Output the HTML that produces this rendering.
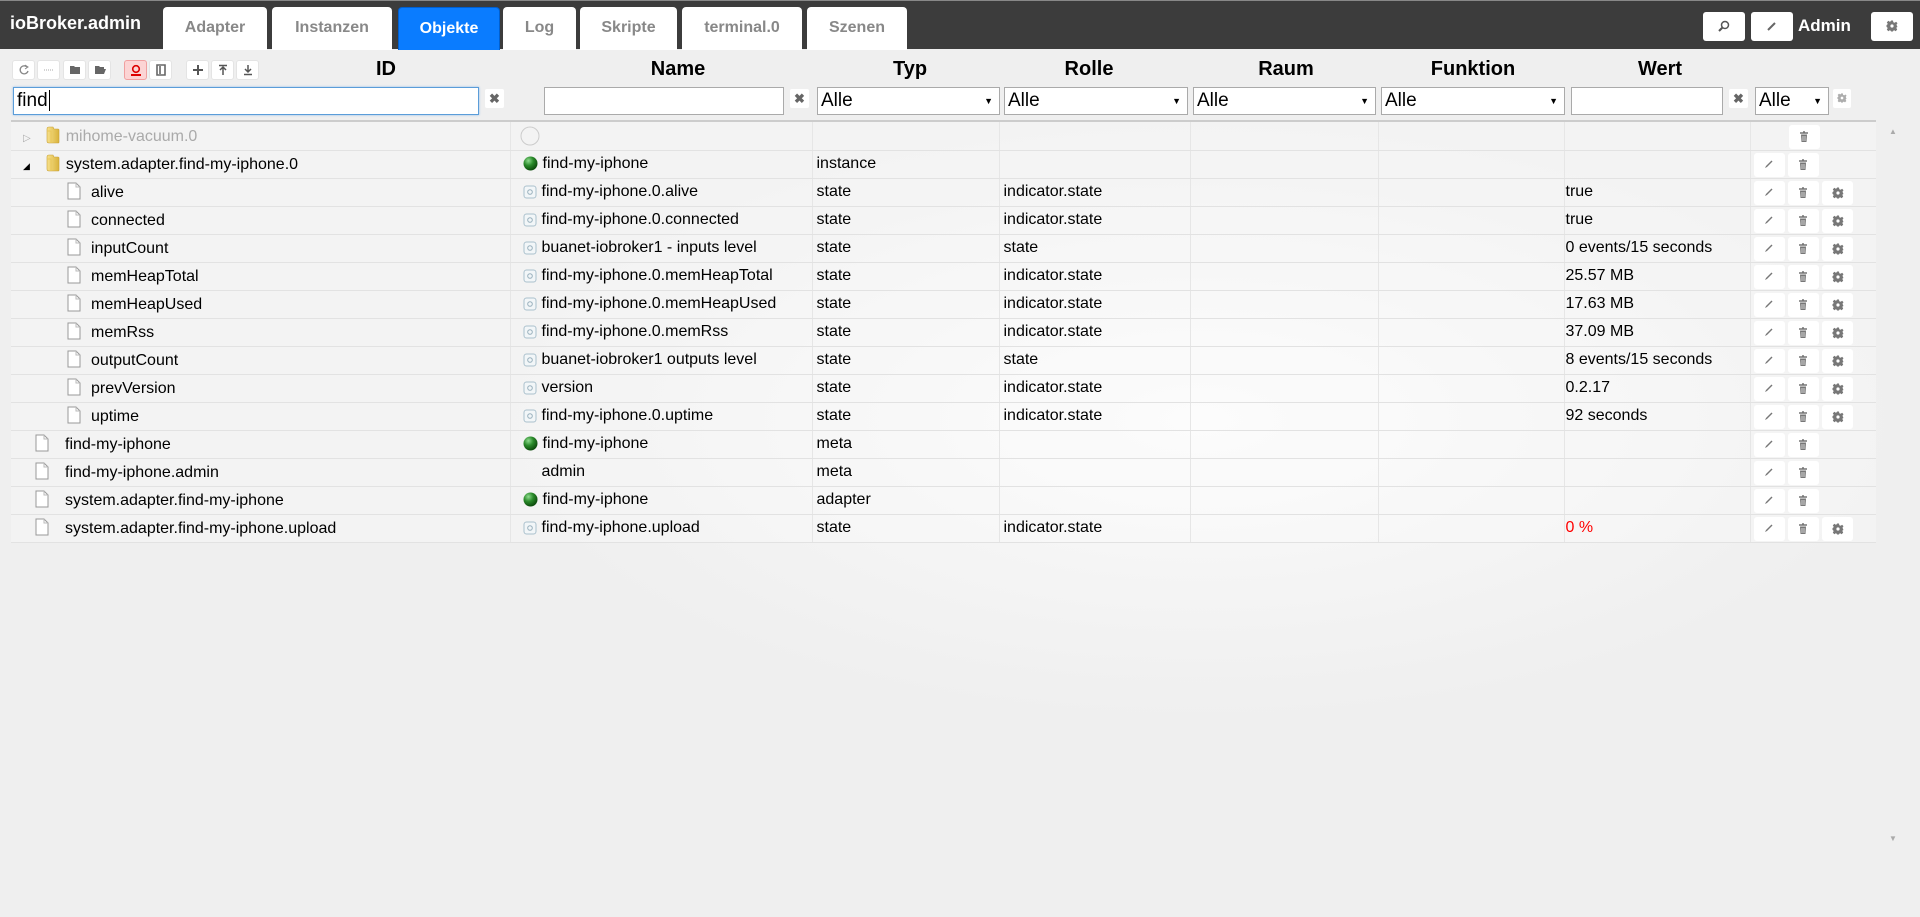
<!DOCTYPE html>
<html><head><meta charset="utf-8"><style>
*{box-sizing:border-box}
body{margin:0;width:1920px;height:917px;overflow:hidden;font-family:"Liberation Sans",Arial,sans-serif;background:radial-gradient(ellipse 700px 300px at 1200px 420px,#fbfbfb,#efefef 100%) #efefef;position:relative;color:#000}
.hdr{position:absolute;left:0;top:0;width:1920px;height:49px;background:#3c3c3c;border-top:1px solid #888}
.brand{position:absolute;left:10px;top:12px;color:#fff;font-weight:bold;font-size:18px}
.tab{position:absolute;top:6px;height:43px;background:#fff;border-radius:4px 4px 0 0;color:#888;font-weight:bold;font-size:16px;text-align:center;line-height:42px}
.tab.act{background:#0a7cff;color:#fff;border:1px solid #005fd0;border-bottom:none}
.hb{position:absolute;top:11px;width:42px;height:29px;background:#fff;border-radius:3px}
.hb svg{position:absolute;left:15px;top:8px}
.admin{position:absolute;left:1798px;top:15px;color:#fff;font-weight:bold;font-size:17px}
.tb{position:absolute;top:60px;width:23px;height:20px;background:#fff;border:1px solid #e4e4e4;border-radius:3px}
.tb svg{position:absolute;left:5px;top:3px}
.th{position:absolute;top:58px;font-weight:bold;font-size:20px;transform:translateX(-50%)}
.inp{position:absolute;top:87px;height:28px;background:#fff;border:1px solid #aaa;font-size:19px;padding:2px 3px;line-height:22px}
.x{position:absolute;top:89px;width:19px;height:19px;background:#fff;border-radius:2px;color:#666;font-size:13px;font-weight:bold;text-align:center;line-height:19px}
.sel::after{content:"▼";position:absolute;right:6px;top:9px;font-size:9px;line-height:1}
.line{position:absolute;left:11px;width:1865px;top:120px;height:2px;background:#ccc}
table{position:absolute;left:11px;top:122px;border-collapse:collapse;table-layout:fixed;width:1865px;font-size:16px}
td{height:28px;padding:0 0 0 4px;border-bottom:1px solid #e2e2e2;border-right:1px solid #e6e6e6;white-space:nowrap;overflow:hidden;background:rgba(255,255,255,.25);position:relative;vertical-align:middle}
td:last-child{border-right:none;padding-top:0}
.ic{display:inline-block;vertical-align:-3px;margin-right:6px}
.ni{margin-left:12px!important;margin-right:5px!important}
.btn{display:inline-block;width:31px;height:24px;background:#fff;border-radius:3px;vertical-align:middle;margin-right:3px;position:relative;top:1px}
.btn svg{position:absolute;left:10px;top:6px}
.gray td{color:#aaa}
.c td:first-child{padding-left:56px}
.c td:first-child .ic{margin-right:10px}
.t td:first-child{padding-left:24px}
.t td:first-child .ic{margin-right:16px}
</style></head><body>
<div class="hdr">
<div class="brand">ioBroker.admin</div>
<div class="tab" style="left:163px;width:104px">Adapter</div>
<div class="tab" style="left:272px;width:120px">Instanzen</div>
<div class="tab act" style="left:398px;width:102px">Objekte</div>
<div class="tab" style="left:503px;width:73px">Log</div>
<div class="tab" style="left:580px;width:97px">Skripte</div>
<div class="tab" style="left:682px;width:120px">terminal.0</div>
<div class="tab" style="left:807px;width:100px">Szenen</div>
<div class="hb" style="left:1703px"><svg width="12" height="12"><circle cx="7" cy="5" r="3.5" fill="none" stroke="#555" stroke-width="1.5"/><line x1="4.5" y1="7.5" x2="1" y2="11" stroke="#555" stroke-width="2"/></svg></div>
<div class="hb" style="left:1751px"><svg width="12" height="12"><path d="M2 10 L9 3" stroke="#666" stroke-width="2"/></svg></div>
<div class="admin">Admin</div>
<div class="hb" style="left:1871px"><svg width="12" height="12"><use href="#gr"/></svg></div>
</div>

<div class="tb" style="left:12px"><svg width="12" height="12"><path d="M9 3 A4 4 0 1 0 10 7" fill="none" stroke="#888" stroke-width="1.3"/><path d="M7 1 L10 3 L7 5" fill="none" stroke="#888"/></svg></div>
<div class="tb" style="left:37px"><svg width="12" height="12"><path d="M1 6 H11" stroke="#aaa" stroke-dasharray="1 1"/></svg></div>
<div class="tb" style="left:63px"><svg width="12" height="12"><path d="M1 2 H5 L6 3 H11 V10 H1Z" fill="#666"/></svg></div>
<div class="tb" style="left:88px"><svg width="13" height="12"><path d="M1 2 H5 L6 3 H10 V5 H3 L1 10Z M3 5 H12 L10 10 H1Z" fill="#666"/></svg></div>
<div class="tb" style="left:124px;background:#fcd4d4;border-color:#f0a0a0"><svg width="12" height="13"><circle cx="6" cy="5" r="3.3" fill="none" stroke="#d00" stroke-width="1.6"/><path d="M1 12 H11 V10 H1Z" fill="#d00"/></svg></div>
<div class="tb" style="left:149px"><svg width="12" height="12"><path d="M2 1 H10 V11 H2Z M5 2 V10" fill="none" stroke="#666" stroke-width="1.6"/></svg></div>
<div class="tb" style="left:186px"><svg width="12" height="12"><path d="M6 1 V11 M1 6 H11" stroke="#555" stroke-width="2"/></svg></div>
<div class="tb" style="left:211px"><svg width="12" height="12"><path d="M2 1.5 H10 M6 3 V11 M3 6 L6 3 L9 6" fill="none" stroke="#555" stroke-width="1.5"/></svg></div>
<div class="tb" style="left:236px"><svg width="12" height="12"><path d="M2 10.5 H10 M6 1 V8 M3 5 L6 8 L9 5" fill="none" stroke="#555" stroke-width="1.5"/></svg></div>

<div class="th" style="left:386px">ID</div>
<div class="th" style="left:678px">Name</div>
<div class="th" style="left:910px">Typ</div>
<div class="th" style="left:1089px">Rolle</div>
<div class="th" style="left:1286px">Raum</div>
<div class="th" style="left:1473px">Funktion</div>
<div class="th" style="left:1660px">Wert</div>

<div class="inp" style="left:13px;width:466px;border:1px solid #5b9dd9;box-shadow:0 0 2px #8ab8e8">find<span style="border-left:1px solid #000;margin-left:1px"></span></div>
<div class="x" style="left:485px">✖</div>
<div class="inp" style="left:544px;width:240px"></div>
<div class="x" style="left:790px">✖</div>
<div class="inp sel" style="left:817px;width:183px">Alle</div>
<div class="inp sel" style="left:1004px;width:184px">Alle</div>
<div class="inp sel" style="left:1193px;width:183px">Alle</div>
<div class="inp sel" style="left:1381px;width:184px">Alle</div>
<div class="inp" style="left:1571px;width:152px"></div>
<div class="x" style="left:1729px">✖</div>
<div class="inp sel" style="left:1755px;width:74px">Alle</div>
<div class="x" style="left:1833px;width:18px"><svg width="10" height="10" style="margin-top:4px" viewBox="0 0 12 12"><use href="#gr" style="opacity:.6"/></svg></div>
<div class="line"></div>

<svg width="0" height="0" style="position:absolute"><defs>
<radialGradient id="g" cx="35%" cy="30%" r="70%"><stop offset="0" stop-color="#8fdc8f"/><stop offset=".5" stop-color="#2a8a2a"/><stop offset="1" stop-color="#0d4d0d"/></radialGradient>
<linearGradient id="f" x1="0" x2="1"><stop offset="0" stop-color="#f7e08a"/><stop offset="1" stop-color="#d9b33c"/></linearGradient>
<symbol id="fold" viewBox="0 0 14 18"><path d="M1 3 Q1 1 3 1 L7 1 L8 3 L12 3 Q13 3 13 4 V16 Q13 17 12 17 H3 Q1 17 1 15Z" fill="url(#f)" stroke="#c9a236" stroke-width=".6"/><path d="M1 5 H5 V17" fill="none" stroke="#e9c75a"/></symbol>
<symbol id="file" viewBox="0 0 14 18"><path d="M1 1 H9 L13 5 V17 H1Z" fill="#fff" stroke="#999"/><path d="M9 1 V5 H13" fill="none" stroke="#bbb"/></symbol>
<symbol id="st" viewBox="0 0 14 14"><rect x="1" y="1" width="12" height="12" rx="2.5" fill="#f2f6f8" stroke="#aac0cc"/><circle cx="7" cy="7" r="2.3" fill="none" stroke="#99b0bd"/></symbol>
<symbol id="pen" viewBox="0 0 10 10"><path d="M1 9 L2 7 L7.5 1.5 L8.5 2.5 L3 8Z" fill="#777"/></symbol>
<symbol id="tr" viewBox="0 0 10 12"><path d="M1 2 H9 M4 1 H6" stroke="#777" stroke-width="1.5"/><path d="M2 3.5 H8 L7.5 11 H2.5Z" fill="#777"/><path d="M4 5 V10 M6 5 V10" stroke="#fff" stroke-width=".7"/></symbol>
<symbol id="gr" viewBox="0 0 12 12"><path d="M5 0.5 H7 L7.3 2.2 L8.7 2.8 L10.1 1.8 L11.5 3.2 L10.5 4.6 L11 6 V6 L11.5 7 L10.5 7.4 L10.5 8.3 L11.2 9.6 L9.6 11.2 L8.3 10.3 L7.2 10.8 L7 11.5 H5 L4.8 10.8 L3.7 10.3 L2.4 11.2 L0.8 9.6 L1.6 8.3 L1.2 7.2 L0.5 7 V5 L1.2 4.8 L1.7 3.7 L0.8 2.4 L2.4 0.8 L3.7 1.7 L4.8 1.2Z" fill="#777"/><circle cx="6" cy="6" r="1.6" fill="#fff"/></symbol>
</defs></svg>

<table>
<colgroup><col style="width:499px"><col style="width:302px"><col style="width:187px"><col style="width:191px"><col style="width:188px"><col style="width:186px"><col style="width:186px"><col style="width:126px"></colgroup>
<tr class="gray"><td style="padding-left:12px"><span style="font-size:10px;color:#aaa;margin-right:15px">▷</span><svg class="ic" width="14" height="18"><use href="#fold"/></svg>mihome-vacuum.0</td><td style="padding-left:0"><svg class="ic" width="22" height="22" style="margin-left:8px;vertical-align:-6px"><circle cx="11" cy="11" r="9" fill="#f3f3f3" stroke="#ccc"/></svg></td><td></td><td></td><td></td><td></td><td></td><td style="padding-left:38px"><span class="btn"><svg width="10" height="12"><use href="#tr"/></svg></span></td></tr>
<tr><td style="padding-left:12px"><span style="font-size:9px;margin-right:16px">◢</span><svg class="ic" width="14" height="18"><use href="#fold"/></svg>system.adapter.find-my-iphone.0</td><td style="padding-left:0"><svg class="ic ni" width="15" height="15"><circle cx="7.5" cy="7.5" r="7" fill="url(#g)"/></svg>find-my-iphone</td><td>instance</td><td></td><td></td><td></td><td></td><td style="padding-left:3px"><span class="btn"><svg width="10" height="10"><use href="#pen"/></svg></span><span class="btn"><svg width="10" height="12"><use href="#tr"/></svg></span></td></tr>
<tr class="c"><td><svg class="ic" width="14" height="18"><use href="#file"/></svg>alive</td><td style="padding-left:0"><svg class="ic ni" width="14" height="14"><use href="#st"/></svg>find-my-iphone.0.alive</td><td>state</td><td>indicator.state</td><td></td><td></td><td style="padding-left:1px">true</td><td style="padding-left:3px"><span class="btn"><svg width="10" height="10"><use href="#pen"/></svg></span><span class="btn"><svg width="10" height="12"><use href="#tr"/></svg></span><span class="btn"><svg width="12" height="12"><use href="#gr"/></svg></span></td></tr>
<tr class="c"><td><svg class="ic" width="14" height="18"><use href="#file"/></svg>connected</td><td style="padding-left:0"><svg class="ic ni" width="14" height="14"><use href="#st"/></svg>find-my-iphone.0.connected</td><td>state</td><td>indicator.state</td><td></td><td></td><td style="padding-left:1px">true</td><td style="padding-left:3px"><span class="btn"><svg width="10" height="10"><use href="#pen"/></svg></span><span class="btn"><svg width="10" height="12"><use href="#tr"/></svg></span><span class="btn"><svg width="12" height="12"><use href="#gr"/></svg></span></td></tr>
<tr class="c"><td><svg class="ic" width="14" height="18"><use href="#file"/></svg>inputCount</td><td style="padding-left:0"><svg class="ic ni" width="14" height="14"><use href="#st"/></svg>buanet-iobroker1 - inputs level</td><td>state</td><td>state</td><td></td><td></td><td style="padding-left:1px">0 events/15 seconds</td><td style="padding-left:3px"><span class="btn"><svg width="10" height="10"><use href="#pen"/></svg></span><span class="btn"><svg width="10" height="12"><use href="#tr"/></svg></span><span class="btn"><svg width="12" height="12"><use href="#gr"/></svg></span></td></tr>
<tr class="c"><td><svg class="ic" width="14" height="18"><use href="#file"/></svg>memHeapTotal</td><td style="padding-left:0"><svg class="ic ni" width="14" height="14"><use href="#st"/></svg>find-my-iphone.0.memHeapTotal</td><td>state</td><td>indicator.state</td><td></td><td></td><td style="padding-left:1px">25.57 MB</td><td style="padding-left:3px"><span class="btn"><svg width="10" height="10"><use href="#pen"/></svg></span><span class="btn"><svg width="10" height="12"><use href="#tr"/></svg></span><span class="btn"><svg width="12" height="12"><use href="#gr"/></svg></span></td></tr>
<tr class="c"><td><svg class="ic" width="14" height="18"><use href="#file"/></svg>memHeapUsed</td><td style="padding-left:0"><svg class="ic ni" width="14" height="14"><use href="#st"/></svg>find-my-iphone.0.memHeapUsed</td><td>state</td><td>indicator.state</td><td></td><td></td><td style="padding-left:1px">17.63 MB</td><td style="padding-left:3px"><span class="btn"><svg width="10" height="10"><use href="#pen"/></svg></span><span class="btn"><svg width="10" height="12"><use href="#tr"/></svg></span><span class="btn"><svg width="12" height="12"><use href="#gr"/></svg></span></td></tr>
<tr class="c"><td><svg class="ic" width="14" height="18"><use href="#file"/></svg>memRss</td><td style="padding-left:0"><svg class="ic ni" width="14" height="14"><use href="#st"/></svg>find-my-iphone.0.memRss</td><td>state</td><td>indicator.state</td><td></td><td></td><td style="padding-left:1px">37.09 MB</td><td style="padding-left:3px"><span class="btn"><svg width="10" height="10"><use href="#pen"/></svg></span><span class="btn"><svg width="10" height="12"><use href="#tr"/></svg></span><span class="btn"><svg width="12" height="12"><use href="#gr"/></svg></span></td></tr>
<tr class="c"><td><svg class="ic" width="14" height="18"><use href="#file"/></svg>outputCount</td><td style="padding-left:0"><svg class="ic ni" width="14" height="14"><use href="#st"/></svg>buanet-iobroker1 outputs level</td><td>state</td><td>state</td><td></td><td></td><td style="padding-left:1px">8 events/15 seconds</td><td style="padding-left:3px"><span class="btn"><svg width="10" height="10"><use href="#pen"/></svg></span><span class="btn"><svg width="10" height="12"><use href="#tr"/></svg></span><span class="btn"><svg width="12" height="12"><use href="#gr"/></svg></span></td></tr>
<tr class="c"><td><svg class="ic" width="14" height="18"><use href="#file"/></svg>prevVersion</td><td style="padding-left:0"><svg class="ic ni" width="14" height="14"><use href="#st"/></svg>version</td><td>state</td><td>indicator.state</td><td></td><td></td><td style="padding-left:1px">0.2.17</td><td style="padding-left:3px"><span class="btn"><svg width="10" height="10"><use href="#pen"/></svg></span><span class="btn"><svg width="10" height="12"><use href="#tr"/></svg></span><span class="btn"><svg width="12" height="12"><use href="#gr"/></svg></span></td></tr>
<tr class="c"><td><svg class="ic" width="14" height="18"><use href="#file"/></svg>uptime</td><td style="padding-left:0"><svg class="ic ni" width="14" height="14"><use href="#st"/></svg>find-my-iphone.0.uptime</td><td>state</td><td>indicator.state</td><td></td><td></td><td style="padding-left:1px">92 seconds</td><td style="padding-left:3px"><span class="btn"><svg width="10" height="10"><use href="#pen"/></svg></span><span class="btn"><svg width="10" height="12"><use href="#tr"/></svg></span><span class="btn"><svg width="12" height="12"><use href="#gr"/></svg></span></td></tr>
<tr class="t"><td><svg class="ic" width="14" height="18"><use href="#file"/></svg>find-my-iphone</td><td style="padding-left:0"><svg class="ic ni" width="15" height="15"><circle cx="7.5" cy="7.5" r="7" fill="url(#g)"/></svg>find-my-iphone</td><td>meta</td><td></td><td></td><td></td><td></td><td style="padding-left:3px"><span class="btn"><svg width="10" height="10"><use href="#pen"/></svg></span><span class="btn"><svg width="10" height="12"><use href="#tr"/></svg></span></td></tr>
<tr class="t"><td><svg class="ic" width="14" height="18"><use href="#file"/></svg>find-my-iphone.admin</td><td style="padding-left:31px">admin</td><td>meta</td><td></td><td></td><td></td><td></td><td style="padding-left:3px"><span class="btn"><svg width="10" height="10"><use href="#pen"/></svg></span><span class="btn"><svg width="10" height="12"><use href="#tr"/></svg></span></td></tr>
<tr class="t"><td><svg class="ic" width="14" height="18"><use href="#file"/></svg>system.adapter.find-my-iphone</td><td style="padding-left:0"><svg class="ic ni" width="15" height="15"><circle cx="7.5" cy="7.5" r="7" fill="url(#g)"/></svg>find-my-iphone</td><td>adapter</td><td></td><td></td><td></td><td></td><td style="padding-left:3px"><span class="btn"><svg width="10" height="10"><use href="#pen"/></svg></span><span class="btn"><svg width="10" height="12"><use href="#tr"/></svg></span></td></tr>
<tr class="t"><td><svg class="ic" width="14" height="18"><use href="#file"/></svg>system.adapter.find-my-iphone.upload</td><td style="padding-left:0"><svg class="ic ni" width="14" height="14"><use href="#st"/></svg>find-my-iphone.upload</td><td>state</td><td>indicator.state</td><td></td><td></td><td style="padding-left:1px;color:#f00">0 %</td><td style="padding-left:3px"><span class="btn"><svg width="10" height="10"><use href="#pen"/></svg></span><span class="btn"><svg width="10" height="12"><use href="#tr"/></svg></span><span class="btn"><svg width="12" height="12"><use href="#gr"/></svg></span></td></tr>
</table>
<div style="position:absolute;left:1889px;top:127px;font-size:8px;color:#aaa">▲</div>
<div style="position:absolute;left:1889px;top:834px;font-size:8px;color:#aaa">▼</div>
</body></html>
